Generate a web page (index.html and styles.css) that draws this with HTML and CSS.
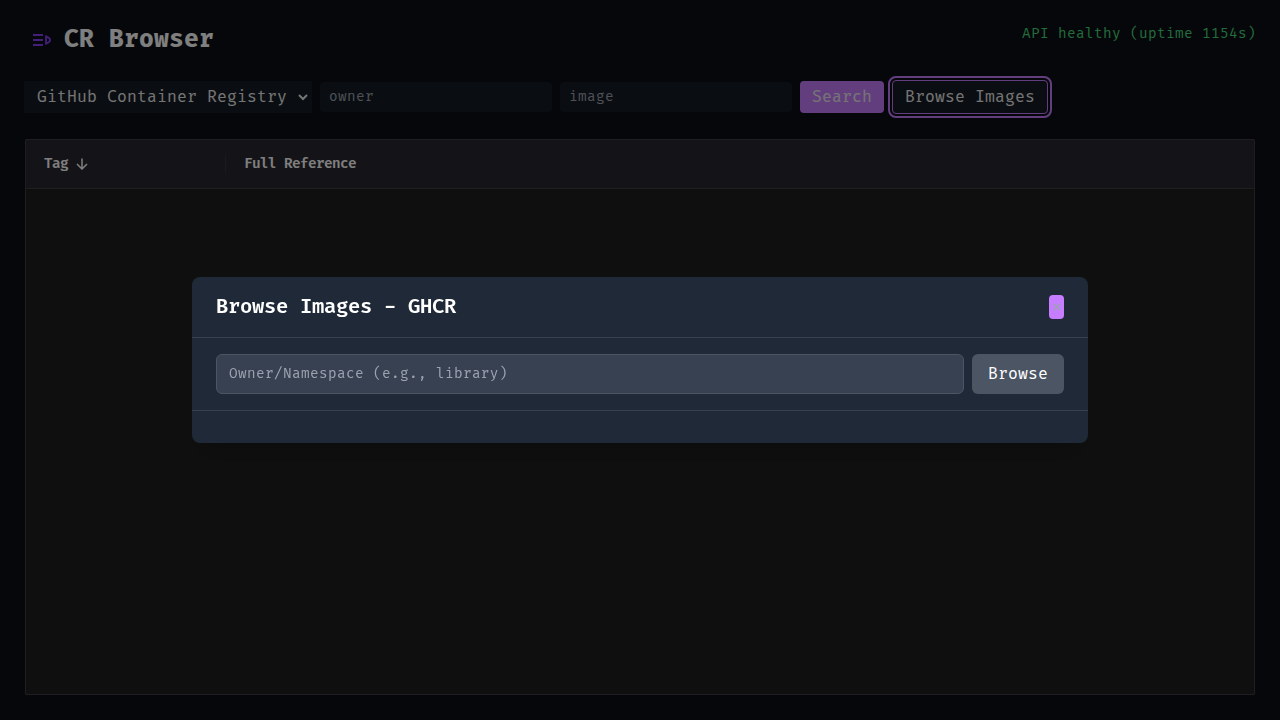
FILE: index.html
```html
<!DOCTYPE html>
<html lang="en">
<head>
<meta charset="utf-8">
<title>CR Browser</title>
<link rel="stylesheet" href="styles.css">
</head>
<body>
<div class="app">
  <header class="header">
    <svg class="logo" width="32" height="32" viewBox="0 0 32 32" fill="none" stroke="currentColor" stroke-width="2"><path d="M9 11h10M9 16h10M9 21h10"/><path d="M22 12.3v7.4c2-.8 4.2-1.8 4.2-3.7s-2.200-2.900-4.200-3.700z" stroke-width="1.8"/></svg>
    <h1 class="title">CR Browser</h1>
    <span class="health">API healthy (uptime 1154s)</span>
  </header>
  <form class="toolbar">
    <div class="select"><span>GitHub Container Registry</span><svg width="10" height="7" viewBox="0 0 10 7" fill="none" stroke="currentColor" stroke-width="2"><path d="M1 1l4 4 4-4"/></svg></div>
    <input class="field" placeholder="owner">
    <input class="field" placeholder="image">
    <button class="search" type="button">Search</button>
    <button class="browse-images" type="button">Browse Images</button>
  </form>
  <main class="grid">
    <div class="grid-head">
      <div class="tag-col"><span class="label">Tag</span><svg width="12" height="12" viewBox="0 0 12 12" fill="none" stroke="currentColor" stroke-width="1.5"><path d="M6 .5v10M1 6l5 5 5-5"/></svg></div>
      <div class="ref-col label">Full Reference</div>
    </div>
  </main>
</div>
<div class="overlay">
  <section class="modal">
    <div class="modal-head"><h2>Browse Images - GHCR</h2><button class="close" type="button" aria-label="Close"><svg width="8" height="8" viewBox="0 0 8 8" fill="none" stroke="currentColor" stroke-width="1.5"><path d="M.7.7l6.600 6.600M7.300.7L.7 7.300"/></svg></button></div>
    <div class="modal-search"><input class="namespace" placeholder="Owner/Namespace (e.g., library)"><button class="browse" type="button">Browse</button></div>
    <div class="modal-body"></div>
  </section>
</div>
</body>
</html>
```
FILE: styles.css
```css
* { box-sizing: border-box; }
body { margin: 0; background: #0c0e16; color: #fff; overflow: hidden; }
body, button, input { font-family: "Fira Code", "Fira Mono", "DejaVu Sans Mono", monospace; }
h1, h2 { margin: 0; }
button, input { border: 0; margin: 0; outline: 0; }
.app { height: 720px; padding: 24px; display: flex; flex-direction: column; }
.header { display: flex; height: 32px; flex: none; }
.logo { color: #8440f4; margin-right: 8px; }
.title { font-size: 24px; line-height: 32px; font-weight: 700; letter-spacing: .23px; }
.health { margin-left: auto; font-size: 14px; line-height: 20px; letter-spacing: .38px; color: #46d878; }
.toolbar { display: flex; align-items: center; gap: 8px; height: 32px; margin-top: 25px; flex: none; }
.select { width: 288px; height: 32px; background: #151b23; display: flex; align-items: center; padding: 0 4px 0 13px; font-size: 16px; letter-spacing: .15px; white-space: nowrap; }
.select svg { margin-left: auto; flex: none; }
.select, .browse-images { color: #ebebeb; }
.field { width: 232px; height: 30px; padding: 0 9px 2px; border-radius: 4px; background: #151b23; font-size: 14px; letter-spacing: .38px; }
.field::placeholder { color: #9ca3af; opacity: 1; }
.search { width: 84px; height: 32px; padding: 0; border-radius: 4px; background: #c77dff; color: #ebebeb; font-size: 16px; letter-spacing: .15px; }
.browse-images { width: 156px; height: 34px; padding: 0; border: 1px solid #c77dff; border-radius: 4px; background: #151b23; outline: 2px solid #c77dff; outline-offset: 2px; font-size: 16px; letter-spacing: .15px; }
.grid { flex: 1; margin: 26px 1px 1px; background: #1f1f21; border: 1px solid #3c3c42; border-radius: 1px; }
.grid-head { height: 49px; background: #29272f; border-bottom: 1px solid #3c3c42; display: flex; align-items: center; font-size: 14px; font-weight: 600; letter-spacing: -.61px; color: #fff; }
.label { padding-bottom: 2px; }
.tag-col { width: 200px; height: 18px; padding-left: 18px; display: flex; align-items: center; gap: 8px; border-right: 1px solid #36353d; }
.ref-col { padding-left: 18px; }
.overlay { position: fixed; inset: 0; background: rgba(0, 0, 0, .5); display: flex; align-items: center; justify-content: center; }
.modal { width: 896px; border-radius: 8px; background: #1f2937; box-shadow: 0 20px 25px -5px rgba(0, 0, 0, .1), 0 8px 10px -6px rgba(0, 0, 0, .1); }
.modal-head { height: 61px; padding: 0 24px; display: flex; align-items: center; justify-content: space-between; border-bottom: 1px solid #374151; }
.modal-head h2 { font-size: 20px; font-weight: 600; letter-spacing: -.31px; line-height: 28px; padding-bottom: 1px; }
.close { width: 15px; height: 24px; padding: 0; border-radius: 4px; background: #c77dff; color: #9ca3af; display: flex; align-items: center; justify-content: center; }
.modal-search { height: 73px; padding: 16px 24px; display: flex; gap: 8px; border-bottom: 1px solid #374151; }
.namespace { flex: 1; padding: 0 12px 1px; border: 1px solid #4b5563; border-radius: 6px; background: #374151; font-size: 14px; letter-spacing: .38px; }
.namespace::placeholder { color: #9ca3af; opacity: 1; }
.browse { width: 92px; padding: 0; border-radius: 6px; background: #4b5563; color: #fff; font-size: 16px; letter-spacing: .15px; }
.modal-body { height: 32px; }
```
